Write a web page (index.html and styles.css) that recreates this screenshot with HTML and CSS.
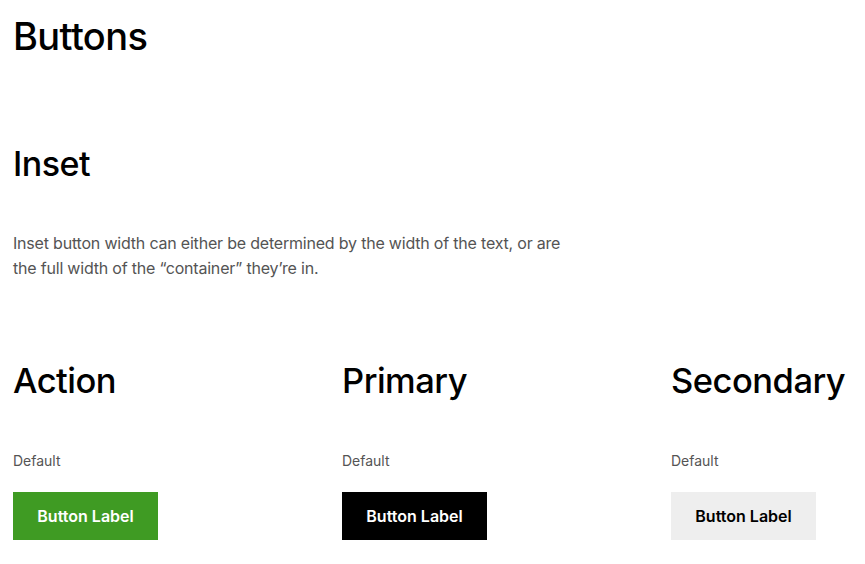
FILE: index.html
```html
<!DOCTYPE html>
<html>
<head>
<meta charset="utf-8">
<link rel="stylesheet" href="styles.css">
</head>
<body>
<main class="page">
  <h1 class="title">Buttons</h1>
  <h2 class="section-title">Inset</h2>
  <p class="desc">Inset button width can either be determined by the width of the text, or are<br>the full width of the “container” they’re in.</p>
  <div class="columns">
    <div class="col">
      <h3 class="col-title">Action</h3>
      <div class="state">Default</div>
      <button class="btn btn-action">Button Label</button>
    </div>
    <div class="col">
      <h3 class="col-title">Primary</h3>
      <div class="state">Default</div>
      <button class="btn btn-primary">Button Label</button>
    </div>
    <div class="col">
      <h3 class="col-title">Secondary</h3>
      <div class="state">Default</div>
      <button class="btn btn-secondary">Button Label</button>
    </div>
  </div>
</main>
</body>
</html>
```
FILE: styles.css
```css
html, body {
  margin: 0;
  padding: 0;
  background: #fff;
}
body {
  font-family: Inter, "Noto Sans", sans-serif;
  color: #000;
}
.page {
  padding: 14px 13px 0 13px;
}
.title {
  margin: 0;
  font-size: 38px;
  line-height: 44px;
  font-weight: 500;
  letter-spacing: -0.6px;
}
.section-title {
  margin: 84px 0 0 0;
  font-size: 34px;
  line-height: 44px;
  font-weight: 500;
  letter-spacing: -0.5px;
}
.desc {
  margin: 45px 0 0 0;
  font-size: 16px;
  line-height: 25px;
  color: #545454;
  letter-spacing: -0.2px;
}
.columns {
  display: grid;
  grid-template-columns: 329px 329px 1fr;
  margin-top: 78px;
}
.col {
  display: flex;
  flex-direction: column;
  align-items: flex-start;
}
.col-title {
  margin: 0;
  font-size: 34.5px;
  line-height: 44px;
  font-weight: 500;
  letter-spacing: -0.5px;
  white-space: nowrap;
}
.state {
  margin-top: 48px;
  font-size: 14px;
  line-height: 20px;
  color: #545454;
}
.btn {
  margin-top: 21px;
  width: 145px;
  height: 48px;
  border: 0;
  border-radius: 0;
  font-family: Inter, "Noto Sans", sans-serif;
  font-size: 16px;
  font-weight: 600;
  padding: 0;
}
.btn-action {
  background: #3f9b23;
  color: #fff;
}
.btn-primary {
  background: #000;
  color: #fff;
}
.btn-secondary {
  background: #eeeeee;
  color: #000;
}
```
